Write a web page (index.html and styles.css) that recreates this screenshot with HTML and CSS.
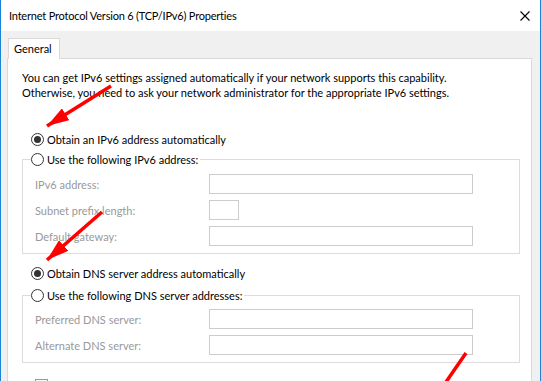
FILE: index.html
```html
<html>
	<head>
		<title>Internet Protocol Version 6 (TCP/IPv6) Properties</title>
		<link rel="stylesheet" href="styles.css">
	</head>
	<body>
		<div class="window">
			<div class="titlebar">
				<span class="title">Internet Protocol Version 6 (TCP/IPv6) Properties</span>
				<svg class="close" width="10" height="10" viewBox="0 0 10 10">
					<path d="M0.5 0.5 L9.5 9.5 M9.5 0.5 L0.5 9.5" stroke="#000" stroke-width="1.1" fill="none"/>
				</svg>
			</div>
			<div class="body">
				<div class="tabs">
					<div class="tab">General</div>
				</div>
				<div class="panel">
					<p class="intro">You can get IPv6 settings assigned automatically if your network supports this capability.<br>
					Otherwise, you need to ask your network administrator for the appropriate IPv6 settings.</p>

					<div class="radio first"><span class="circle on"></span>Obtain an IPv6 address automatically</div>
					<fieldset class="group">
						<legend><div class="radio"><span class="circle"></span>Use the following IPv6 address:</div></legend>
						<div class="row"><span class="lbl">IPv6 address:</span><span class="field"></span></div>
						<div class="row"><span class="lbl">Subnet prefix length:</span><span class="field small"></span></div>
						<div class="row"><span class="lbl">Default gateway:</span><span class="field"></span></div>
					</fieldset>

					<div class="radio second"><span class="circle on"></span>Obtain DNS server address automatically</div>
					<fieldset class="group dns">
						<legend><div class="radio"><span class="circle"></span>Use the following DNS server addresses:</div></legend>
						<div class="row"><span class="lbl">Preferred DNS server:</span><span class="field"></span></div>
						<div class="row"><span class="lbl">Alternate DNS server:</span><span class="field"></span></div>
					</fieldset>

					<!-- the "validate settings" checkbox, only its top edge is in view -->
					<div class="check"><span class="box"></span></div>
				</div>
			</div>
		</div>

		<!-- red arrows drawn over the dialog -->
		<svg class="arrows" width="541" height="381" viewBox="0 0 541 381">
			<defs>
				<marker id="head" markerUnits="userSpaceOnUse" markerWidth="22" markerHeight="14" refX="22" refY="7" orient="auto" viewBox="0 0 22 14">
					<path d="M0 0 L22 7 L0 14 Z" fill="#ff0000"/>
				</marker>
			</defs>
			<line x1="111" y1="86" x2="47" y2="126" stroke="#ff0000" stroke-width="3.5" marker-end="url(#head)"/>
			<line x1="102" y1="212" x2="47" y2="260" stroke="#ff0000" stroke-width="3.5" marker-end="url(#head)"/>
			<line x1="466" y1="353" x2="446" y2="382" stroke="#ff0000" stroke-width="3.5"/>
		</svg>
	</body>
</html>
```

FILE: styles.css
```css
html {
  height: 100%;
}

body {
  margin: 0;
  height: 100%;
  position: relative;
  overflow: hidden;
  font-family: Lato, "Liberation Sans", sans-serif;
  font-size: 11px;
  color: #000;
}

.window {
  height: 381px;
  overflow: hidden;
  box-sizing: border-box;
  border-left: 1px solid #1883d7;
  border-right: 1px solid #1883d7;
  background-color: #f0f0f0;
}

.titlebar {
  height: 31px;
  background-color: #fff;
  display: flex;
  align-items: center;
  padding-left: 8px;
}

.title {
  letter-spacing: -0.2px;
}

.close {
  margin-left: auto;
  margin-right: 10px;
}

.body {
  padding: 7px 8px 0 6px;
}

.tabs {
  display: flex;
}

.tab {
  position: relative;
  z-index: 1;
  margin-left: 1px;
  margin-bottom: -1px;
  width: 45px;
  height: 20px;
  line-height: 20px;
  padding-left: 5px;
  background-color: #fff;
  border: 1px solid #d9d9d9;
  border-bottom: none;
}

.panel {
  background-color: #fff;
  border: 1px solid #d9d9d9;
  padding: 0 11px 0 14px;
}

.intro {
  margin: 11px 0 0 0;
  line-height: 15px;
}

.radio {
  display: flex;
  align-items: center;
  height: 16px;
  margin-left: 9px;
}

.radio.first {
  margin-top: 31px;
}

.radio.second {
  margin-top: 11px;
}

.circle {
  width: 11px;
  height: 11px;
  border: 1px solid #333;
  border-radius: 50%;
  background-color: #fff;
  margin-right: 3px;
  display: flex;
  align-items: center;
  justify-content: center;
}

.circle.on::after {
  content: "";
  width: 7px;
  height: 7px;
  border-radius: 50%;
  background-color: #333;
}

.group {
  margin: 4px 0 0 0;
  padding: 0 0 7px 8px;
  border: 1px solid #dcdcdc;
  min-width: 0;
}

.group.dns {
  margin-top: 6px;
}

.group legend {
  padding: 0 2px 0 0;
  margin-left: 0;
}

.group legend .radio {
  margin-left: 0;
}

.row {
  display: flex;
  align-items: center;
  height: 20px;
  margin: 6px 0 0 4px;
}

.group legend + .row {
  margin-top: 7px;
}

.group.dns legend + .row {
  margin-top: 6px;
}

.lbl {
  width: 174px;
  color: #999;
}

.field {
  width: 262px;
  height: 18px;
  border: 1px solid #ccc;
  background-color: #fff;
}

.field.small {
  width: 28px;
}

.check {
  display: flex;
  margin: 16px 0 0 13px;
}

.box {
  width: 11px;
  height: 11px;
  border: 1px solid #999;
}

.arrows {
  position: absolute;
  left: 0;
  top: 0;
  pointer-events: none;
}
```
